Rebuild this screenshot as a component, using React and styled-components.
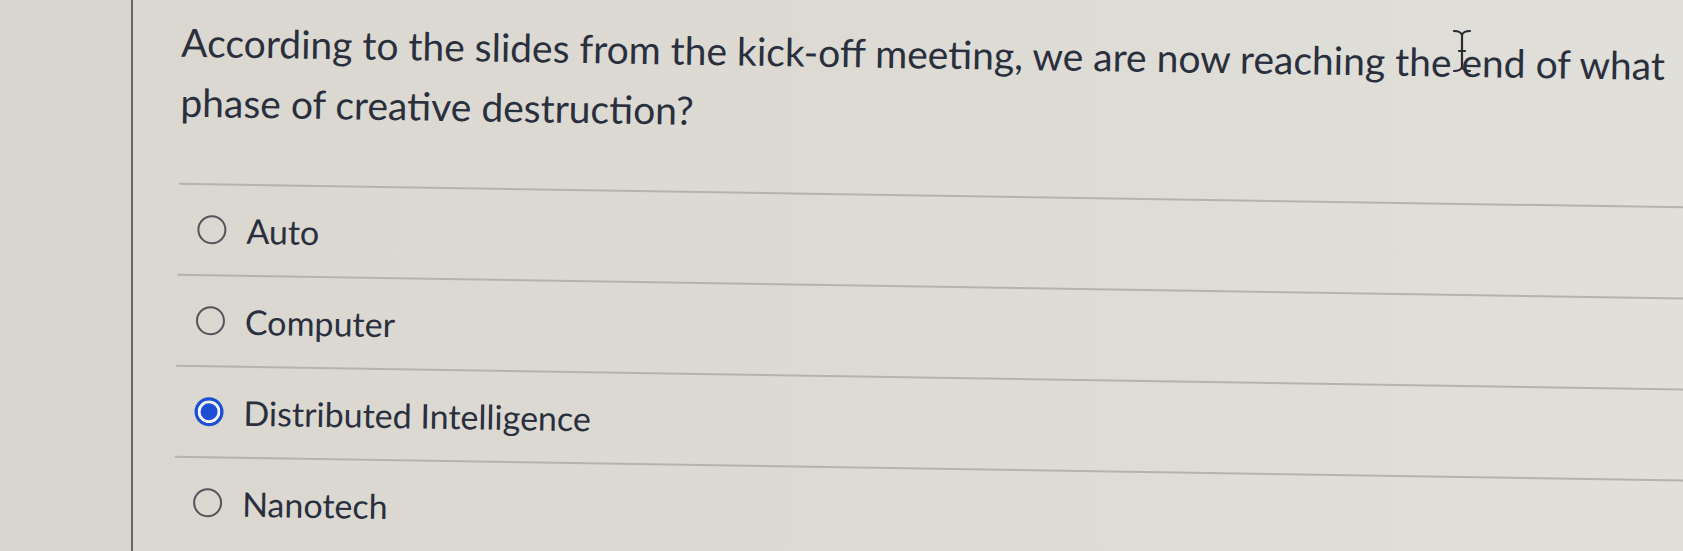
import React, { useState } from "react";
import styled, { createGlobalStyle } from "styled-components";

const GlobalStyle = createGlobalStyle`
  html, body {
    margin: 0;
    padding: 0;
    background: #dbd9d1;
  }
  body {
    font-family: Lato, "Open Sans", "Liberation Sans", sans-serif;
  }
`;

const Page = styled.div`
  position: relative;
  display: flex;
  width: 1683px;
  height: 551px;
  overflow: hidden;
  background: linear-gradient(90deg, #d9d7cf 0%, #dcdad3 45%, #e0dfd9 100%);
`;

const Sidebar = styled.div`
  flex: 0 0 131px;
  border-right: 2px solid #66656a;
  background: #d8d6ce;
`;

const Content = styled.div`
  flex: 1;
  padding-left: 49px;
  transform: rotate(0.9deg);
  transform-origin: 0 0;
`;

const Question = styled.p`
  margin: 11px 0 0;
  max-width: 1505px;
  font-size: 39px;
  line-height: 60px;
  color: #2a2f3d;
`;

const Answers = styled.div`
  margin-top: 51px;
  width: 1600px;
`;

const Row = styled.label`
  display: flex;
  align-items: center;
  gap: 20px;
  height: 89px;
  padding-left: 19px;
  border-top: 2px solid #b4b3ad;
  font-size: 34px;
  color: #2a2f3d;
  cursor: pointer;
`;

const Radio = styled.span`
  box-sizing: border-box;
  flex: 0 0 29px;
  width: 29px;
  height: 29px;
  border-radius: 50%;
  border: ${(p) => (p.checked ? "3px solid #1d4fd6" : "2px solid #55545a")};
  background: ${(p) => (p.checked ? "#1d4fd6" : "transparent")};
  box-shadow: ${(p) => (p.checked ? "inset 0 0 0 3px #f4f4f2" : "none")};
`;

const Cursor = styled.svg`
  position: absolute;
  left: 1451px;
  top: 28px;
  width: 22px;
  height: 46px;
`;

const options = ["Auto", "Computer", "Distributed Intelligence", "Nanotech"];

export default function App() {
  const [picked, setPicked] = useState("Distributed Intelligence");
  return (
    <>
      <GlobalStyle />
      <Page>
        <Sidebar />
        <Content>
          <Question>
            According to the slides from the kick-off meeting, we are now reaching the end of what
            phase of creative destruction?
          </Question>
          <Answers>
            {options.map((o) => (
              <Row key={o} onClick={() => setPicked(o)}>
                <Radio checked={picked === o} />
                {o}
              </Row>
            ))}
          </Answers>
        </Content>
        <Cursor viewBox="0 0 22 46">
          <path
            d="M3 3 C7 3 10 4 11 7 C12 4 15 3 19 3 M11 7 L11 39 C10 42 7 43 3 43 M11 39 C12 42 15 43 19 43 M8 23 L14 23"
            fill="none"
            stroke="#2a2a30"
            strokeWidth="2.2"
            strokeLinecap="round"
          />
        </Cursor>
      </Page>
    </>
  );
}
